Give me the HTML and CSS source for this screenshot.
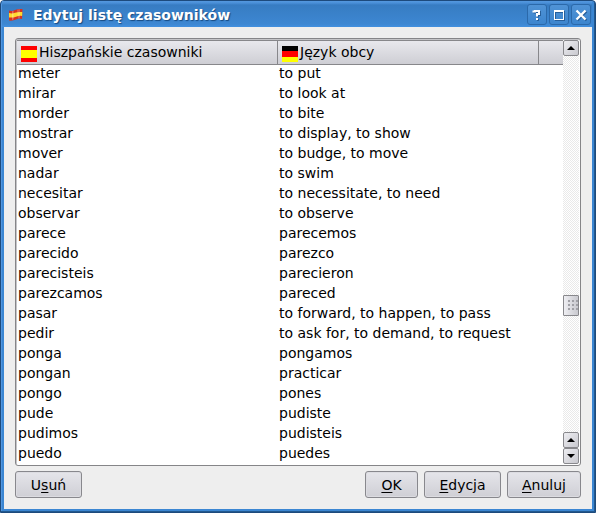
FILE: index.html
```html
<!DOCTYPE html>
<html lang="pl">
<head>
<meta charset="utf-8">
<title>Edytuj listę czasowników</title>
<link rel="stylesheet" href="styles.css">
</head>
<body>
<div class="window">
  <header class="titlebar">
    <svg class="app-icon" width="16" height="14" viewBox="0 0 16 14">
      <path d="M1 2.5Q4 3.5 7 2T14.500 1L14 11Q11 10 8 11.500T1 12.500Z" fill="#d8321f"/>
      <path d="M1 5Q4 6 7 4.800T14.300 4L14.100 8Q11 7.500 8 8.700T1 9.500Z" fill="#ffd92e"/>
      <path d="M4 3.200L5.500 3V11.500L4 12Z" fill="#fff" opacity=".3"/>
      <path d="M9 1.800L12 1.200V10.300L10 10.600Z" fill="#fff" opacity=".2"/>
    </svg>
    <h1 class="title">Edytuj listę czasowników</h1>
    <div class="controls">
      <button class="control"><svg width="20" height="20" viewBox="0 0 20 20"><path d="M6.500 7.500V6.500H8V6H12V9H10V11.500M10 13V15" fill="none" stroke="#fff" stroke-width="2"/></svg></button>
      <button class="control"><svg width="20" height="20" viewBox="0 0 20 20"><path d="M5 5H15V15H5ZM6 7V14H14V7Z" fill="#fff" fill-rule="evenodd"/></svg></button>
      <button class="control"><svg width="20" height="20" viewBox="0 0 20 20"><path d="M5.500 5.500L14.500 14.500M14.500 5.500L5.500 14.500" stroke="#fff" stroke-width="2.300"/></svg></button>
    </div>
  </header>
  <main class="content">
    <section class="list">
      <div class="table">
        <div class="head">
          <div class="head-cell"><i class="flag spain"></i><span class="head-a">Hiszpańskie czasowniki</span></div>
          <div class="head-cell"><i class="flag germany"></i><span class="head-b">Język obcy</span></div>
          <div class="head-cell"></div>
        </div>
        <div class="rows">
          <div class="row"><span>meter</span><span>to put</span></div>
          <div class="row"><span>mirar</span><span>to look at</span></div>
          <div class="row"><span>morder</span><span>to bite</span></div>
          <div class="row"><span>mostrar</span><span>to display, to show</span></div>
          <div class="row"><span>mover</span><span>to budge, to move</span></div>
          <div class="row"><span>nadar</span><span>to swim</span></div>
          <div class="row"><span>necesitar</span><span>to necessitate, to need</span></div>
          <div class="row"><span>observar</span><span>to observe</span></div>
          <div class="row"><span>parece</span><span>parecemos</span></div>
          <div class="row"><span>parecido</span><span>parezco</span></div>
          <div class="row"><span>parecisteis</span><span>parecieron</span></div>
          <div class="row"><span>parezcamos</span><span>pareced</span></div>
          <div class="row"><span>pasar</span><span>to forward, to happen, to pass</span></div>
          <div class="row"><span>pedir</span><span>to ask for, to demand, to request</span></div>
          <div class="row"><span>ponga</span><span>pongamos</span></div>
          <div class="row"><span>pongan</span><span>practicar</span></div>
          <div class="row"><span>pongo</span><span>pones</span></div>
          <div class="row"><span>pude</span><span>pudiste</span></div>
          <div class="row"><span>pudimos</span><span>pudisteis</span></div>
          <div class="row"><span>puedo</span><span>puedes</span></div>
        </div>
      </div>
      <div class="scrollbar">
        <div class="step"><svg width="8" height="4" viewBox="0 0 8 4"><path d="M0 4L4 0L8 4Z"/></svg></div>
        <div class="track"><div class="thumb"><i class="grip"></i></div></div>
        <div class="step"><svg width="8" height="4" viewBox="0 0 8 4"><path d="M0 4L4 0L8 4Z"/></svg></div>
        <div class="step"><svg width="8" height="4" viewBox="0 0 8 4"><path d="M0 0H8L4 4Z"/></svg></div>
      </div>
    </section>
    <footer class="actions">
      <button class="button delete"><span>U<u>s</u>uń</span></button>
      <button class="button ok"><span><u>O</u>K</span></button>
      <button class="button edit"><span><u>E</u>dycja</span></button>
      <button class="button cancel"><span><u>A</u>nuluj</span></button>
    </footer>
  </main>
</div>
</body>
</html>
```
FILE: styles.css
```css
* { box-sizing: border-box; }
body {
  margin: 0;
  background: #fff;
  color: #000;
  font: 14px/20px "DejaVu Sans", sans-serif;
  overflow: hidden;
}
button { font: inherit; color: inherit; margin: 0; padding: 0; }
.window {
  width: 596px;
  height: 513px;
  display: flex;
  flex-direction: column;
  padding: 0 2px 2px 0;
  border: 1px solid #1d4a7c;
  border-radius: 4px 4px 0 0;
  background: #3b86d2;
  box-shadow: inset -1px -1px #22598f, inset 1px 1px #5297e0;
}
.titlebar {
  height: 26px;
  flex: none;
  margin: 0 1px;
  display: flex;
  align-items: center;
  padding: 1px 1px 0 6px;
  background: linear-gradient(#5598df 0, #4a8fd8 2px, #377cc2 4px, #3d87d2 23px, #4290df 26px);
}
.title {
  margin: 0 0 0 9px;
  color: #fff;
  font-size: 14px;
  line-height: 20px;
  letter-spacing: 0;
  text-shadow: 1px 1px 1px #174a80;
  white-space: nowrap;
}
.app-icon { flex: none; }
.controls { display: flex; gap: 2px; margin-left: auto; }
.control {
  width: 20px;
  height: 21px;
  border: 1px solid #2b69aa;
  border-radius: 3px;
  background: linear-gradient(#5093d6, #3c85ce);
  display: flex;
  align-items: center;
  justify-content: center;
}
.control svg { flex: none; filter: drop-shadow(1px 1px 0 #275f9b); }
.content {
  flex: 1;
  margin: 0 1px 1px 3px;
  padding: 11px 11px 0;
  background: #eee;
  min-height: 0;
}
.list {
  height: 428px;
  width: 566px;
  display: flex;
  border: 1px solid #858588;
  border-radius: 3px;
  background: #fff;
  padding: 1px 0 1px 1px;
  box-shadow: inset 1px 1px #c5c5c8;
}
.table { width: 546px; display: flex; flex-direction: column; overflow: hidden; }
.head { height: 25px; flex: none; display: grid; grid-template-columns: 261px 261px 24px; z-index: 1; }
.head-cell {
  display: flex;
  border: 1px solid #87878b;
  border-width: 1px 1px 1px 0;
  background: linear-gradient(#e8e8ed, #ceced4);
  padding-left: 4px;
  white-space: nowrap;
}
.head-cell:last-child { border-right: 0; }
.head-cell span { margin-left: 2px; line-height: 22px; }
.flag { width: 16px; height: 16px; flex: none; margin-top: 5px; }
.spain { background: linear-gradient(#f00 4px, #ff0 4px 12px, #f00 12px); }
.germany { background: linear-gradient(#000 5px, #f00 5px 11px, #ff0 11px); }
.rows { margin-top: -2px; }
.row { height: 20px; display: grid; grid-template-columns: 261px 1fr; padding-left: 1px; white-space: nowrap; }
.scrollbar { width: 17px; display: flex; flex-direction: column; padding-right: 1px; }
.step {
  height: 16px;
  flex: none;
  display: flex;
  align-items: center;
  justify-content: center;
  border: 1px solid #88888c;
  border-radius: 2px;
  background: linear-gradient(135deg, #ededf1, #c9c9cf);
}
.track { flex: 1; padding-top: 239px; background: repeating-conic-gradient(#e9e9e9 0 25%, #fff 0 50%) 0 0 / 2px 2px; }
.thumb {
  height: 21px;
  border: 1px solid #88888c;
  border-radius: 1px;
  background: linear-gradient(90deg, #eeeef2, #c9c9cf);
  padding: 4px 2px;
}
.grip { display: block; width: 12px; height: 12px; background: linear-gradient(#aaaab0, #aaaab0) 0 0 / 2px 2px; background: conic-gradient(from 90deg at 2px 2px, transparent 75%, #a0a0a6 0) 0 0 / 4px 4px; }
.actions { display: flex; gap: 6px; padding: 5px 0 0; width: 566px; }
.button {
  height: 27px;
  border: 1px solid #88888d;
  border-radius: 3px;
  background: linear-gradient(#e5e5ea, #cfcfd5);
  box-shadow: inset 0 0 0 1px #dcdce1;
}
.button u { text-decoration-thickness: 1px; text-underline-offset: 2px; }
.delete { width: 67px; margin-right: auto; }
.ok { width: 53px; }
.edit { width: 77px; }
.cancel { width: 74px; }
```
